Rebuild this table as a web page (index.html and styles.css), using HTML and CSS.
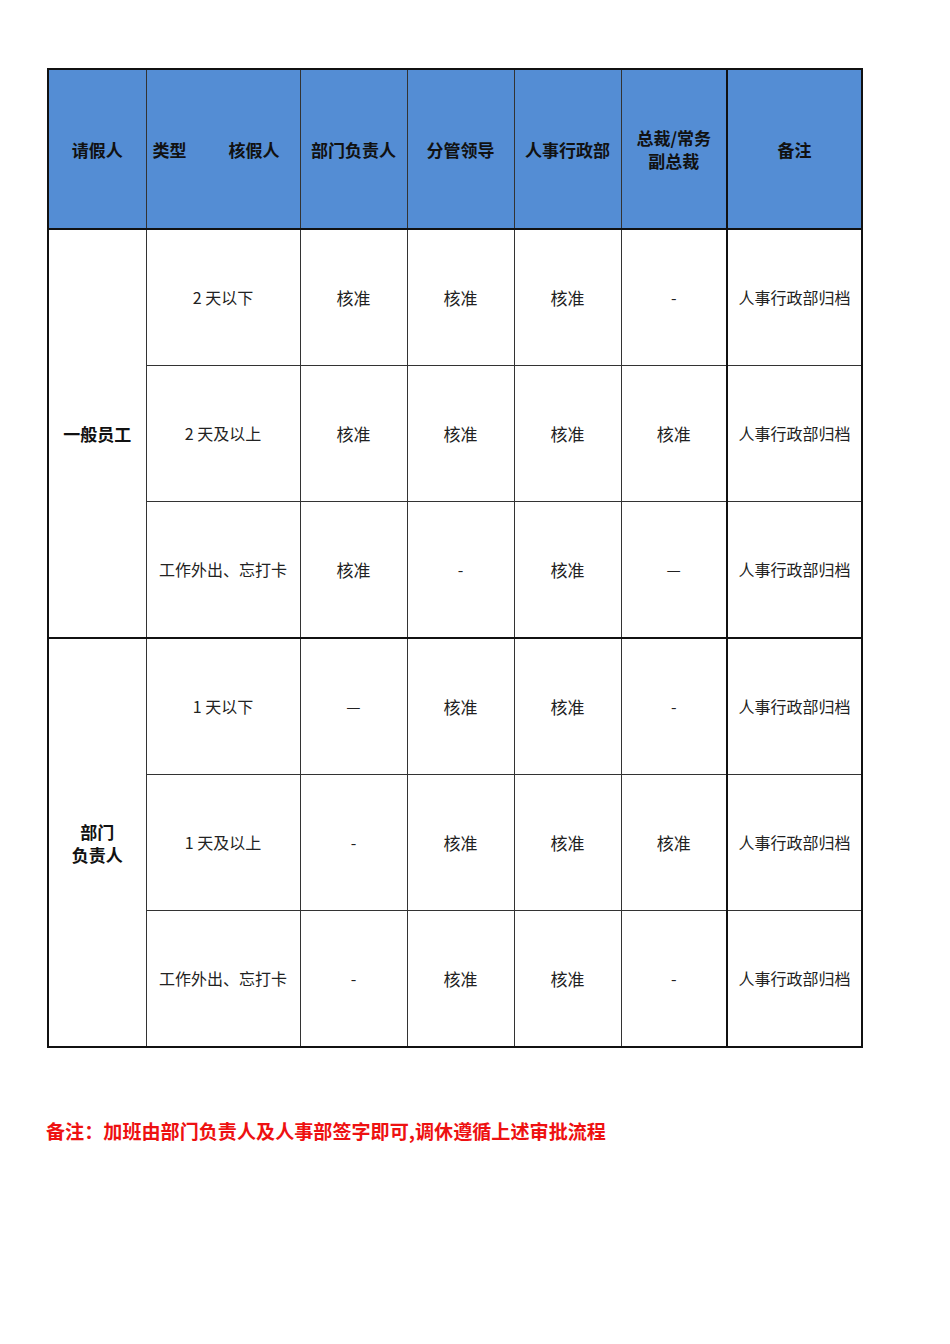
FILE: index.html
```html
<!DOCTYPE html>
<html lang="zh">
<head>
<meta charset="utf-8">
<link rel="stylesheet" href="styles.css">
</head>
<body>
<div class="page">
<table class="grid">
  <colgroup>
    <col class="c1"><col class="c2"><col class="c3"><col class="c4"><col class="c5"><col class="c6"><col class="c7">
  </colgroup>
  <thead>
    <tr class="head">
      <th>请假人</th>
      <th class="split"><span class="t1">类型</span><span class="t2">核假人</span></th>
      <th>部门负责人</th>
      <th>分管领导</th>
      <th>人事行政部</th>
      <th>总裁/常务<br>副总裁</th>
      <th class="note">备注</th>
    </tr>
  </thead>
  <tbody>
    <tr>
      <td rowspan="3" class="who">一般员工</td>
      <td>2 天以下</td><td class="ok">核准</td><td class="ok">核准</td><td class="ok">核准</td><td>-</td><td class="note">人事行政部归档</td>
    </tr>
    <tr>
      <td>2 天及以上</td><td class="ok">核准</td><td class="ok">核准</td><td class="ok">核准</td><td class="ok">核准</td><td class="note">人事行政部归档</td>
    </tr>
    <tr>
      <td>工作外出、忘打卡</td><td class="ok">核准</td><td>-</td><td class="ok">核准</td><td>—</td><td class="note">人事行政部归档</td>
    </tr>
    <tr class="group">
      <td rowspan="3" class="who">部门<br>负责人</td>
      <td>1 天以下</td><td>—</td><td class="ok">核准</td><td class="ok">核准</td><td>-</td><td class="note">人事行政部归档</td>
    </tr>
    <tr>
      <td>1 天及以上</td><td>-</td><td class="ok">核准</td><td class="ok">核准</td><td class="ok">核准</td><td class="note">人事行政部归档</td>
    </tr>
    <tr>
      <td>工作外出、忘打卡</td><td>-</td><td class="ok">核准</td><td class="ok">核准</td><td>-</td><td class="note">人事行政部归档</td>
    </tr>
  </tbody>
</table>
<p class="remark">备注：加班由部门负责人及人事部签字即可,调休遵循上述审批流程</p>
</div>
</body>
</html>
```
FILE: styles.css
```css
html, body {
  margin: 0;
  padding: 0;
  background: #fff;
}
body {
  font-family: "Noto Sans CJK SC", "Microsoft YaHei", sans-serif;
  color: #222;
}
.page {
  padding: 68px 0 0 47px;
}
.grid {
  border-collapse: collapse;
  table-layout: fixed;
  width: 814px;
  border: 2px solid #111;
}
.c1 { width: 98px; }
.c2 { width: 154px; }
.c3 { width: 107px; }
.c4 { width: 107px; }
.c5 { width: 107px; }
.c6 { width: 106px; }
.c7 { width: 135px; }
.grid th, .grid td {
  border: 1px solid #333;
  text-align: center;
  vertical-align: middle;
  padding: 0;
}
.head th {
  background: #548dd4;
  height: 158px;
  font-size: 17px;
  font-weight: 700;
  color: #111;
  line-height: 23px;
  border-bottom: 2px solid #111;
}
.head th.split {
  text-align: left;
  padding-left: 6px;
}
.split .t2 {
  margin-left: 42px;
}
.grid td {
  height: 135px;
  font-size: 16px;
  line-height: 23px;
  color: #222;
}
.grid td.ok {
  font-size: 17px;
}
.grid td.who {
  font-size: 17px;
  font-weight: 700;
  color: #111;
}
.grid .note {
  border-left: 2px solid #111;
}
.group td {
  border-top: 2px solid #111;
}
.remark {
  margin: 69px 0 0 -1px;
  font-size: 19.1px;
  font-weight: 700;
  color: #ee1111;
  line-height: 28px;
}
```
